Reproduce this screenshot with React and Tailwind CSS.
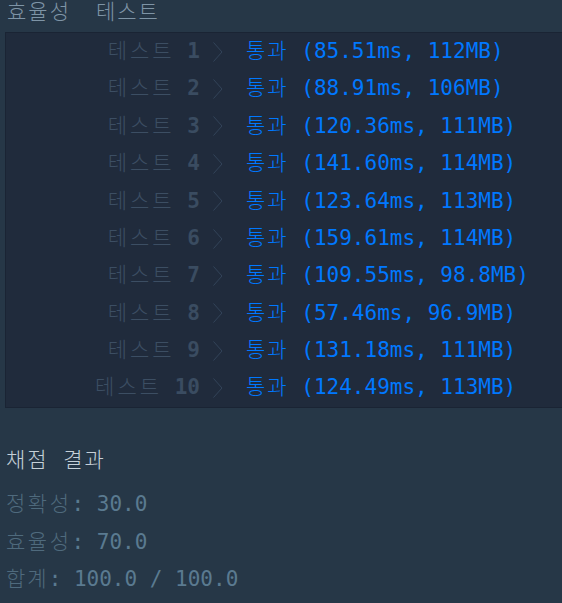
import React from "react";

const rows = [
  ["1", "(85.51ms, 112MB)"],
  ["2", "(88.91ms, 106MB)"],
  ["3", "(120.36ms, 111MB)"],
  ["4", "(141.60ms, 114MB)"],
  ["5", "(123.64ms, 113MB)"],
  ["6", "(159.61ms, 114MB)"],
  ["7", "(109.55ms, 98.8MB)"],
  ["8", "(57.46ms, 96.9MB)"],
  ["9", "(131.18ms, 111MB)"],
  ["10", "(124.49ms, 113MB)"],
];

const font = { fontFamily: '"DejaVu Sans Mono", "Noto Sans CJK KR", monospace' };

function Chevron() {
  return (
    <svg width="10" height="20" viewBox="0 0 10 20" className="shrink-0">
      <polyline points="0.5,0.5 9,10 0.5,19.5" fill="none" stroke="#33445a" strokeWidth="1" />
    </svg>
  );
}

export default function App() {
  return (
    <div className="w-[562px] h-[603px] overflow-hidden bg-[#263747] text-[21px]" style={font}>
      <div className="h-[32px] pl-[7px] flex items-center -mt-[4px] text-[#7e94a6] font-light leading-none tracking-[2px]">
        <span>효율성</span>
        <span className="ml-[25px]">테스트</span>
      </div>
      <div className="mt-[4px] ml-[5px] w-[580px] bg-[#202b3c] border border-[#1a2434]">
        {rows.map(([n, r]) => (
          <div key={n} className="h-[37.4px] flex items-center whitespace-pre">
            <div className="w-[194px] text-right text-[#3c4e63]">
              <span className="font-light tracking-[3px]">테스트</span> <span className="font-bold text-[#3a4c61]">{n}</span>
            </div>
            <div className="ml-[13px] mr-[25px] flex items-center">
              <Chevron />
            </div>
            <div className="-ml-[2px] text-[#0078ff]">
              <span className="font-light tracking-[2px]">통과</span> {r}
            </div>
          </div>
        ))}
      </div>
      <div className="pl-[6px] mt-[32px]">
        <div className="h-[38px] flex items-center text-[#c5d0d8] font-light tracking-[2px] pt-[4px]">
          채점&nbsp;결과
        </div>
        <div className="mt-[8px] text-[#5a7a90]">
          <div className="h-[38px] flex items-center whitespace-pre"><span className="font-light tracking-[2.5px] text-[#4f6a7d]">정확성</span>: 30.0</div>
          <div className="h-[37.5px] flex items-center whitespace-pre"><span className="font-light tracking-[2.5px] text-[#4f6a7d]">효율성</span>: 70.0</div>
          <div className="h-[37.5px] flex items-center whitespace-pre"><span className="font-light tracking-[2px] text-[#4f6a7d]">합계</span>: 100.0 / 100.0</div>
        </div>
      </div>
    </div>
  );
}
